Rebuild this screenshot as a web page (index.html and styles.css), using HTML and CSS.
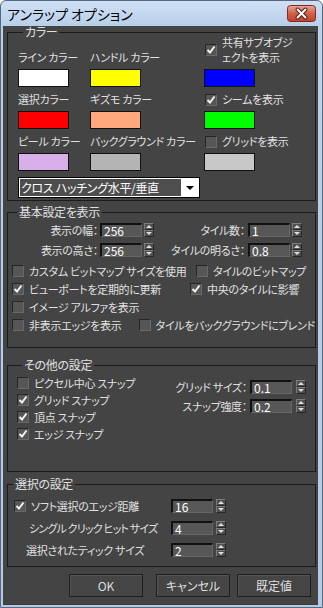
FILE: index.html
```html
<!DOCTYPE html>
<html>
<head>
    <meta charset="UTF-8">
    <meta name="viewport" content="width=device-width, initial-scale=1.0">
    <title>アンラップ オプション</title>
    <link rel="stylesheet" href="styles.css">
</head>
<body>
    <!-- check mark shared by every checked box -->
    <svg class="defs" width="0" height="0">
        <symbol id="chk" viewBox="0 0 10 10">
            <path d="M1.5 5 L4 7.5 L8.5 1.5" fill="none" stroke="#f2f2f2" stroke-width="2"/>
        </symbol>
    </svg>

    <div class="window">
        <div class="titlebar">
            <span class="title">アンラップ オプション</span>
            <svg class="close" width="29" height="17" viewBox="0 0 29 17">
                <defs>
                    <linearGradient id="cg" x1="0" y1="0" x2="0" y2="1">
                        <stop offset="0" stop-color="#e9a898"/>
                        <stop offset="0.5" stop-color="#d2604a"/>
                        <stop offset="1" stop-color="#c23f26"/>
                    </linearGradient>
                </defs>
                <rect x="0.5" y="0.5" width="28" height="16" rx="3" fill="url(#cg)" stroke="#7c2e22"/>
                <path d="M10.5 4.5 L18.5 12.5 M18.5 4.5 L10.5 12.5" stroke="#4d1d15" stroke-width="4" stroke-linecap="round"/>
                <path d="M10.5 4.5 L18.5 12.5 M18.5 4.5 L10.5 12.5" stroke="#ffffff" stroke-width="2" stroke-linecap="round"/>
            </svg>
        </div>

        <div class="client">
            <!-- colours -->
            <fieldset class="group group-color">
                <legend>カラー</legend>
                <div class="color-grid">
                    <div class="cell"><span class="lbl">ライン カラー</span><span class="swatch sw-white"></span></div>
                    <div class="cell"><span class="lbl">ハンドル カラー</span><span class="swatch sw-yellow"></span></div>
                    <div class="cell">
                        <label class="check check-tall"><span class="cb"><svg><use href="#chk"/></svg></span><span>共有サブオブジ<br>ェクトを表示</span></label>
                        <span class="swatch sw-blue"></span>
                    </div>

                    <div class="cell"><span class="lbl">選択カラー</span><span class="swatch sw-red"></span></div>
                    <div class="cell"><span class="lbl">ギズモ カラー</span><span class="swatch sw-salmon"></span></div>
                    <div class="cell">
                        <label class="check check-tall"><span class="cb"><svg><use href="#chk"/></svg></span><span>シームを表示</span></label>
                        <span class="swatch sw-green"></span>
                    </div>

                    <div class="cell"><span class="lbl">ピール カラー</span><span class="swatch sw-lilac"></span></div>
                    <div class="cell"><span class="lbl">バックグラウンド カラー</span><span class="swatch sw-gray"></span></div>
                    <div class="cell">
                        <label class="check check-tall"><span class="cb"></span><span>グリッドを表示</span></label>
                        <span class="swatch sw-light"></span>
                    </div>
                </div>
                <div class="select">
                    <span class="select-text">クロス ハッチング水平/垂直</span>
                    <span class="select-arrow"></span>
                </div>
            </fieldset>

            <!-- display -->
            <fieldset class="group group-basic">
                <legend>基本設定を表示</legend>
                <div class="spin-grid">
                    <span class="field-lbl">表示の幅：</span>
                    <span class="num">256</span>
                    <span class="spin"><i class="up"></i><i class="down"></i></span>
                    <span class="field-lbl">タイル数：</span>
                    <span class="num">1</span>
                    <span class="spin"><i class="up"></i><i class="down"></i></span>

                    <span class="field-lbl">表示の高さ：</span>
                    <span class="num">256</span>
                    <span class="spin"><i class="up"></i><i class="down"></i></span>
                    <span class="field-lbl">タイルの明るさ：</span>
                    <span class="num">0.8</span>
                    <span class="spin"><i class="up"></i><i class="down"></i></span>
                </div>
                <div class="check-rows">
                    <div class="row">
                        <label class="check w184"><span class="cb"></span>カスタム ビットマップ サイズを使用</label>
                        <label class="check"><span class="cb"></span>タイルのビットマップ</label>
                    </div>
                    <div class="row">
                        <label class="check w178"><span class="cb"><svg><use href="#chk"/></svg></span>ビューポートを定期的に更新</label>
                        <label class="check"><span class="cb"><svg><use href="#chk"/></svg></span>中央のタイルに影響</label>
                    </div>
                    <div class="row">
                        <label class="check"><span class="cb"></span>イメージ アルファを表示</label>
                    </div>
                    <div class="row">
                        <label class="check w129"><span class="cb"></span>非表示エッジを表示</label>
                        <label class="check"><span class="cb"></span>タイルをバックグラウンドにブレンド</label>
                    </div>
                </div>
            </fieldset>

            <!-- other -->
            <fieldset class="group group-other">
                <legend>その他の設定</legend>
                <div class="other-body">
                    <div class="snap-list">
                        <label class="check"><span class="cb"></span>ピクセル中心 スナップ</label>
                        <label class="check"><span class="cb"><svg><use href="#chk"/></svg></span>グリッド スナップ</label>
                        <label class="check"><span class="cb"><svg><use href="#chk"/></svg></span>頂点 スナップ</label>
                        <label class="check"><span class="cb"><svg><use href="#chk"/></svg></span>エッジ スナップ</label>
                    </div>
                    <div class="snap-grid">
                        <span class="field-lbl">グリッド サイズ：</span>
                        <span class="num">0.1</span>
                        <span class="spin"><i class="up"></i><i class="down"></i></span>
                        <span class="field-lbl">スナップ強度：</span>
                        <span class="num">0.2</span>
                        <span class="spin"><i class="up"></i><i class="down"></i></span>
                    </div>
                </div>
            </fieldset>

            <!-- selection -->
            <fieldset class="group group-select">
                <legend>選択の設定</legend>
                <div class="select-grid">
                    <label class="check pad6"><span class="cb"><svg><use href="#chk"/></svg></span>ソフト選択のエッジ距離</label>
                    <span class="num">16</span>
                    <span class="spin"><i class="up"></i><i class="down"></i></span>

                    <span class="pad21">シングル クリック ヒット サイズ</span>
                    <span class="num">4</span>
                    <span class="spin"><i class="up"></i><i class="down"></i></span>

                    <span class="pad18">選択されたティック サイズ</span>
                    <span class="num">2</span>
                    <span class="spin"><i class="up"></i><i class="down"></i></span>
                </div>
            </fieldset>

            <div class="buttons">
                <span class="btn btn-ok">OK</span>
                <span class="btn btn-cancel">キャンセル</span>
                <span class="btn">既定値</span>
            </div>
        </div>
    </div>
</body>
</html>
```

FILE: styles.css
```css
* {
    box-sizing: border-box;
}

body {
    margin: 0;
    font-family: "Noto Sans CJK JP", "Noto Sans", sans-serif;
    font-size: 11px;
    font-feature-settings: "palt";
    letter-spacing: -0.3px;
    color: #e0e0e0;
}

.defs {
    position: absolute;
}

.window {
    width: 323px;
    height: 608px;
    display: flex;
    flex-direction: column;
    border: 1px solid #56687e;
    border-radius: 6px 6px 0 0;
    background: linear-gradient(#cfe0f4, #b9d0ea 24px, #b3cbe7);
}

.titlebar {
    height: 25px;
    display: flex;
    align-items: center;
    justify-content: space-between;
    padding: 0 6px;
}

.title {
    font-size: 14px;
    letter-spacing: 0;
    color: #000;
}

.client {
    flex: 1;
    margin: 0 4px 2px 2px;
    padding: 1px 2px 0 4px;
    background: #444444;
    border-bottom: 1px solid #3a3a3a;
}

/* group boxes */
.group {
    margin: 0;
    padding: 0;
    min-width: 0;
    border: 1px solid #1b1b1b;
}

.group legend {
    margin-left: 5px;
    padding: 0 2px;
    line-height: 10px;
    font-size: 12px;
}

.group-color {
    padding: 0 0 2px 10px;
}

.group-basic {
    margin-top: 6px;
    padding: 6px 0 13px 4px;
}

.group-other {
    margin-top: 12px;
    padding: 4px 0 29px 9px;
}

.group-select {
    margin-top: 7px;
    padding: 10px 0 9px 0;
}

/* colour swatches */
.color-grid {
    display: grid;
    grid-template-columns: 72px 114px 1fr;
    row-gap: 5px;
    align-items: end;
    margin-top: -2px;
}

.cell {
    display: flex;
    flex-direction: column;
    align-items: flex-start;
}

.lbl {
    line-height: 15px;
    white-space: nowrap;
}

.swatch {
    width: 51px;
    height: 18px;
    margin-top: 4px;
    border: 1px solid #111;
}

.sw-white { background: #ffffff; }
.sw-yellow { background: #ffff00; }
.sw-blue { background: #0000ff; }
.sw-red { background: #ff0000; }
.sw-salmon { background: #ffa87e; }
.sw-green { background: #00ff00; }
.sw-lilac { background: #d9afea; }
.sw-gray { background: #b4b4b4; }
.sw-light { background: #c8c8c8; }

.select {
    width: 182px;
    height: 21px;
    margin-top: 6px;
    display: flex;
    padding: 1px;
    border: 1px solid #000;
    background: #ffffff;
}

.select-text {
    flex: 1;
    line-height: 17px;
    padding-left: 1px;
    color: #ffffff;
    background: #4e4e4e;
    white-space: nowrap;
    font-size: 12px;
}

.select-arrow {
    width: 17px;
    display: flex;
    align-items: center;
    justify-content: center;
}

.select-arrow::before {
    content: "";
    border-top: 4px solid #000;
    border-left: 4px solid transparent;
    border-right: 4px solid transparent;
}

/* checkboxes */
.check {
    display: flex;
    align-items: center;
    gap: 5px;
    white-space: nowrap;
}

.check-tall {
    line-height: 15px;
    margin-left: 1px;
}

.cb {
    width: 12px;
    height: 12px;
    flex-shrink: 0;
    display: flex;
    align-items: center;
    justify-content: center;
    border: 1px solid;
    border-color: #262626 #696969 #696969 #262626;
    background: #565656;
}

.cb svg {
    width: 10px;
    height: 10px;
}

.check-rows {
    margin-top: 5px;
}

.row {
    height: 18px;
    display: flex;
    align-items: center;
}

.w184 { width: 184px; }
.w178 { width: 178px; }
.w129 { width: 129px; }

/* number fields */
.spin-grid {
    display: grid;
    grid-template-columns: 86px 44px 12px 91px 45px 12px;
    grid-auto-rows: 14px;
    row-gap: 6px;
    align-items: center;
}

.field-lbl {
    text-align: right;
    white-space: nowrap;
}

.num {
    justify-self: end;
    width: 42px;
    height: 14px;
    padding-left: 2px;
    line-height: 11px;
    font-size: 12px;
    letter-spacing: 0;
    color: #ffffff;
    background: #575757;
    border-style: solid;
    border-width: 2px 1px 1px 2px;
    border-color: #111 #666 #666 #111;
}

.spin {
    justify-self: end;
    width: 10px;
    height: 14px;
    display: flex;
    flex-direction: column;
}

.spin i {
    flex: 1;
    display: flex;
    align-items: center;
    justify-content: center;
    border: 1px solid;
    border-color: #7c7c7c #262626 #262626 #7c7c7c;
    background: #505050;
}

.spin .up::before {
    content: "";
    border-bottom: 3px solid #dedede;
    border-left: 3px solid transparent;
    border-right: 3px solid transparent;
}

.spin .down::before {
    content: "";
    border-top: 3px solid #dedede;
    border-left: 3px solid transparent;
    border-right: 3px solid transparent;
}

/* other settings */
.other-body {
    display: flex;
    align-items: flex-start;
}

.snap-list {
    width: 150px;
}

.snap-list .check {
    height: 17px;
}

.snap-grid {
    margin-top: 6px;
    display: grid;
    grid-template-columns: 80px 45px 14px;
    grid-auto-rows: 14px;
    row-gap: 5px;
    align-items: center;
}

/* selection settings */
.select-grid {
    display: grid;
    grid-template-columns: 163px 43px 12px;
    grid-auto-rows: 14px;
    row-gap: 8px;
    align-items: center;
}

.select-grid .num {
    justify-self: start;
}

.pad6 { padding-left: 6px; }
.pad21 { padding-left: 21px; white-space: nowrap; letter-spacing: -0.8px; }
.pad18 { padding-left: 18px; white-space: nowrap; }

/* buttons */
.buttons {
    display: flex;
    justify-content: flex-end;
    margin-top: 7px;
    padding-right: 5px;
}

.btn {
    width: 74px;
    height: 23px;
    display: flex;
    align-items: center;
    justify-content: center;
    font-size: 12px;
    letter-spacing: 0;
    color: #dedede;
    background: #454545;
    border: 1px solid #1e1e1e;
    box-shadow: inset 1px 1px 0 #555;
}

.btn-ok {
    margin-right: 13px;
}

.btn-cancel {
    margin-right: 7px;
}
```
